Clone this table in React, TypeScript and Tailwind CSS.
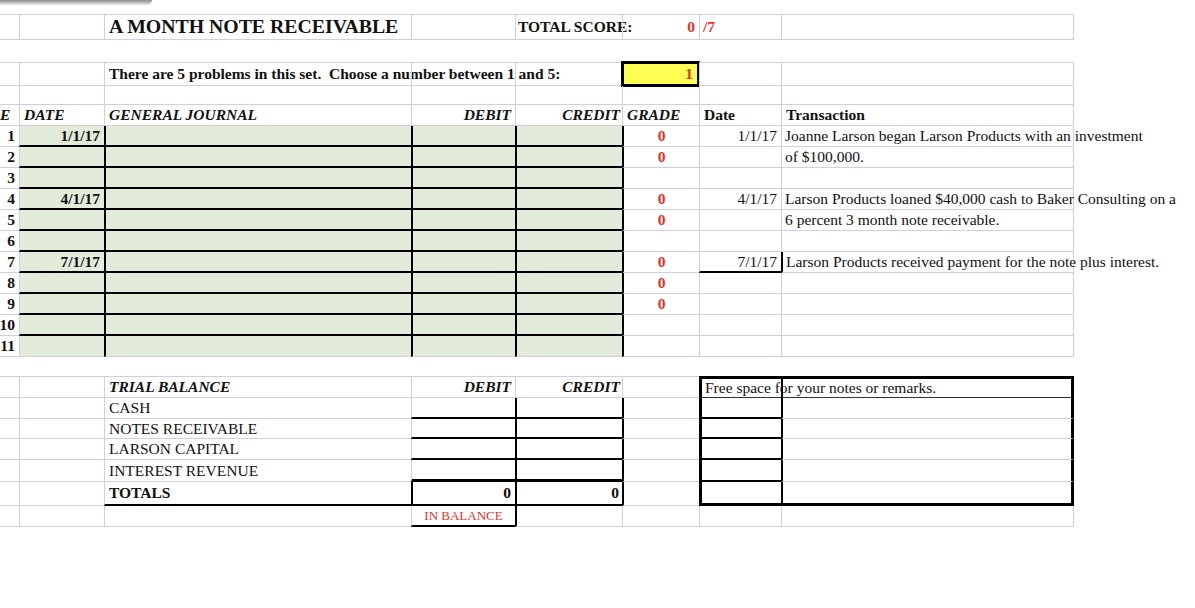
import React from 'react';

const cols = 'grid grid-cols-[19px_85px_307px_104px_107px_77px_82px_293px] w-[1074px]';

// base cell: left + bottom gridline, cells are relative so later cells' lines paint over overflowing text
const base = 'relative flex items-center whitespace-nowrap px-1 border-b border-[#d0d0dd]';
const gl = 'border-l border-[#d0d0dd]';
const red = 'text-[#e3342b] font-bold';

interface JournalRow {
  n: number;
  date?: string;
  grade?: boolean;
  gdate?: string;
  trans?: string;
}

const journal: JournalRow[] = [
  { n: 1, date: '1/1/17', grade: true, gdate: '1/1/17', trans: 'Joanne Larson began Larson Products with an investment' },
  { n: 2, grade: true, trans: 'of $100,000.' },
  { n: 3 },
  { n: 4, date: '4/1/17', grade: true, gdate: '4/1/17', trans: 'Larson Products loaned $40,000 cash to Baker Consulting on a' },
  { n: 5, grade: true, trans: '6 percent 3 month note receivable.' },
  { n: 6 },
  { n: 7, date: '7/1/17', grade: true, gdate: '7/1/17', trans: 'Larson Products received payment for the note plus interest.' },
  { n: 8, grade: true },
  { n: 9, grade: true },
  { n: 10 },
  { n: 11 },
];

const accounts = [
  { name: 'CASH', h: 'h-[21px]', last: false },
  { name: 'NOTES RECEIVABLE', h: 'h-[20px]', last: false },
  { name: 'LARSON CAPITAL', h: 'h-[21px]', last: false },
  { name: 'INTEREST REVENUE', h: 'h-[22px]', last: true },
];

export default function App() {
  return (
    <div className="min-h-[608px] w-full overflow-hidden bg-white text-[15.5px] leading-none text-[#111] font-['Liberation_Serif','Times_New_Roman',serif]">
      {/* shadow of the toolbar popover */}
      <div className="h-[14px]">
        <div className="h-[5px] w-[152px] rounded-br-md bg-gradient-to-b from-[#8d8d8d] to-[#ececec]" />
      </div>

      {/* title row */}
      <div className={`${cols} h-[26px]`}>
        <div className={`${base} border-t`} />
        <div className={`${base} ${gl} border-t`} />
        <div className={`${base} ${gl} border-t text-[19.8px] font-bold`}>A MONTH NOTE RECEIVABLE</div>
        <div className={`${base} ${gl} border-t`} />
        <div className={`${base} ${gl} border-t font-bold pl-[2px]`}>TOTAL SCORE:</div>
        <div className={`${base} ${gl} border-t justify-end ${red}`}>0</div>
        <div className={`${base} ${gl} border-t pl-[3px] ${red}`}>/7</div>
        <div className={`${base} ${gl} border-t border-r`} />
      </div>

      <div className="h-[22px]" />

      {/* problem chooser */}
      <div className={`${cols} h-[24px]`}>
        <div className={`${base} border-t`} />
        <div className={`${base} ${gl} border-t`} />
        <div className={`${base} ${gl} border-t font-bold`}>
          There are 5 problems in this set.&nbsp; Choose a number between 1 and 5:
        </div>
        <div className={`${base} ${gl} border-t`} />
        <div className={`${base} ${gl} border-t`} />
        <div className={`relative -m-[1px] flex items-center justify-end px-1 border-[3px] border-black bg-[#fdfd52] ${red}`}>1</div>
        <div className={`${base} ${gl} border-t`} />
        <div className={`${base} ${gl} border-t border-r`} />
      </div>
      <div className={`${cols} h-[19px]`}>
        <div className={base} />
        <div className={`${base} ${gl}`} />
        <div className={`${base} ${gl}`} />
        <div className={`${base} ${gl}`} />
        <div className={`${base} ${gl}`} />
        <div className={`${base} ${gl}`} />
        <div className={`${base} ${gl}`} />
        <div className={`${base} ${gl} border-r`} />
      </div>

      {/* journal header */}
      <div className={`${cols} h-[21px] font-bold`}>
        <div className={`${base} italic pl-0`}>E</div>
        <div className={`${base} ${gl} italic`}>DATE</div>
        <div className={`${base} ${gl} italic`}>GENERAL JOURNAL</div>
        <div className={`${base} ${gl} italic justify-end`}>DEBIT</div>
        <div className={`${base} ${gl} italic justify-end pr-[2px]`}>CREDIT</div>
        <div className={`${base} ${gl} italic`}>GRADE</div>
        <div className={`${base} ${gl}`}>Date</div>
        <div className={`${base} ${gl} border-r`}>Transaction</div>
      </div>

      {journal.map((r, i) => {
        const last = i === journal.length - 1;
        const gb = last ? 'border-b border-b-[#d0d0dd]' : 'border-b-2 border-b-black';
        return (
          <div key={r.n} className={`${cols} h-[21px]`}>
            <div className={`${base} justify-end font-bold`}>{r.n}</div>
            <div className={`${base} ${gl} ${gb} bg-[#e3ebdb] justify-end font-bold`}>{r.date}</div>
            <div className={`${base} border-l-2 border-l-black ${gb} bg-[#e3ebdb]`} />
            <div className={`${base} border-l-2 border-l-black ${gb} bg-[#e3ebdb]`} />
            <div className={`${base} border-l-2 border-l-black ${gb} bg-[#e3ebdb]`} />
            <div className={`${base} border-l-2 border-l-black justify-center ${red}`}>{r.grade ? '0' : ''}</div>
            <div className={`${base} ${gl} justify-end ${r.n === 7 ? 'border-b-2 border-b-black' : ''}`}>{r.gdate}</div>
            <div className={`${base} border-r pl-[3px] ${r.n === 7 ? 'border-l-2 border-l-black' : gl}`}>{r.trans}</div>
          </div>
        );
      })}

      <div className="h-[19px]" />

      {/* trial balance */}
      <div className={`${cols} h-[22px]`}>
        <div className={`${base} border-t`} />
        <div className={`${base} ${gl} border-t`} />
        <div className={`${base} ${gl} border-t font-bold italic`}>TRIAL BALANCE</div>
        <div className={`${base} ${gl} border-t font-bold italic justify-end`}>DEBIT</div>
        <div className={`${base} ${gl} border-t font-bold italic justify-end pr-[2px]`}>CREDIT</div>
        <div className={`${base} ${gl} border-t`} />
        <div className={`${base} border-t-[3px] border-t-black border-l-[3px] border-l-black border-b-[#333] pl-[3px]`}>
          Free space for your notes or remarks.
        </div>
        <div className={`${base} border-t-[3px] border-t-black border-l-2 border-l-black border-r-[3px] border-r-black border-b-[#333]`} />
      </div>

      {accounts.map((a) => {
        const db = a.last ? 'border-b-[3px] border-b-black' : 'border-b-2 border-b-black';
        return (
          <div key={a.name} className={`${cols} ${a.h}`}>
            <div className={base} />
            <div className={`${base} ${gl}`} />
            <div className={`${base} ${gl}`}>{a.name}</div>
            <div className={`${base} ${gl} ${db}`} />
            <div className={`${base} border-l-2 border-l-black ${db}`} />
            <div className={`${base} border-l-2 border-l-black`} />
            <div className={`${base} border-l-[3px] border-l-black border-b-2 border-b-black`} />
            <div className={`${base} border-l-2 border-l-black border-r-[3px] border-r-black`} />
          </div>
        );
      })}

      <div className={`${cols} h-[24px]`}>
        <div className={base} />
        <div className={`${base} ${gl}`} />
        <div className={`${base} ${gl} border-b-2 border-b-black font-bold`}>TOTALS</div>
        <div className={`${base} border-l-2 border-l-black border-b-2 border-b-black justify-end font-bold`}>0</div>
        <div className={`${base} border-l-2 border-l-black border-b-2 border-b-black justify-end font-bold pr-[3px]`}>0</div>
        <div className={`${base} border-l-2 border-l-black`} />
        <div className={`${base} border-l-[3px] border-l-black border-b-[3px] border-b-black`} />
        <div className={`${base} border-l-2 border-l-black border-r-[3px] border-r-black border-b-[3px] border-b-black`} />
      </div>

      <div className={`${cols} h-[21px]`}>
        <div className={base} />
        <div className={`${base} ${gl}`} />
        <div className={`${base} ${gl}`} />
        <div className={`${base} ${gl} border-b-2 border-b-black justify-center text-[13px] text-[#e3342b]`}>IN BALANCE</div>
        <div className={`${base} border-l-2 border-l-black`} />
        <div className={`${base} ${gl}`} />
        <div className={`${base} ${gl}`} />
        <div className={`${base} ${gl} border-r`} />
      </div>
    </div>
  );
}
